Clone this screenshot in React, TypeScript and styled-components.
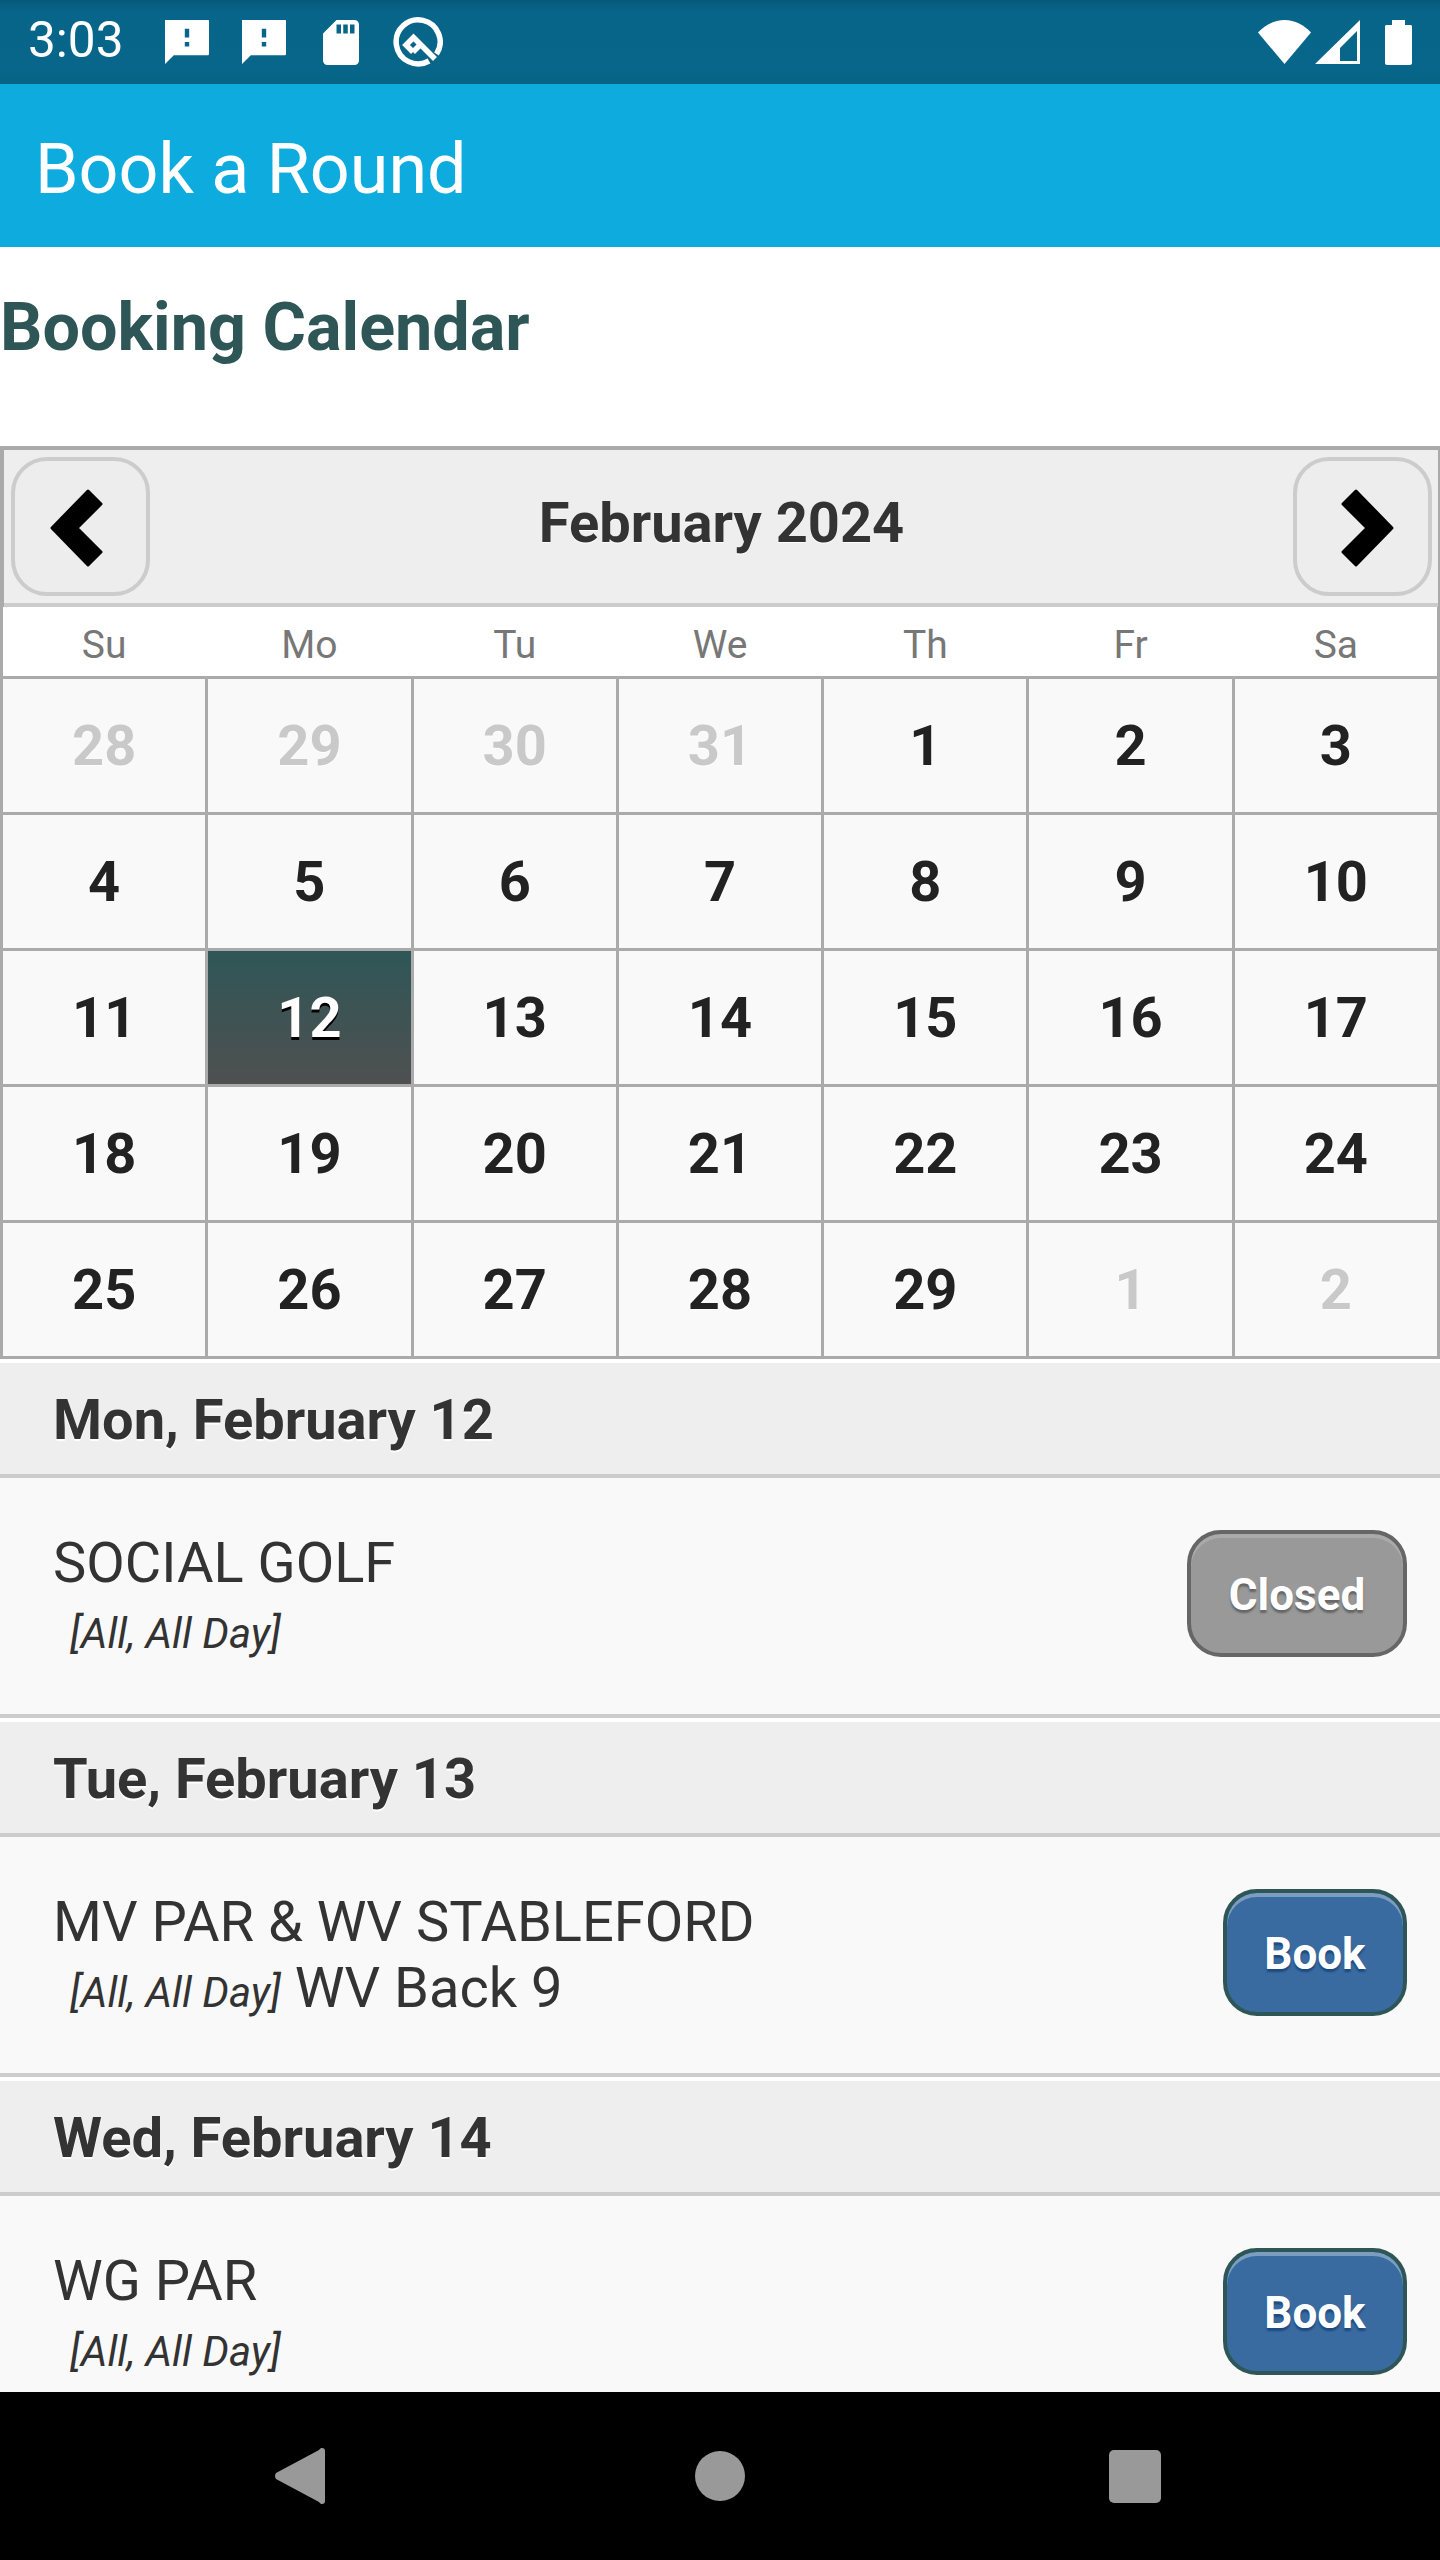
import React from 'react';
import styled, { createGlobalStyle } from 'styled-components';

const Global = createGlobalStyle`
  html, body { margin: 0; padding: 0; background: #fff; }
  body { font-family: Roboto, "Liberation Sans", sans-serif; }
  * { box-sizing: border-box; }
`;

const Screen = styled.div`
  width: 1440px; height: 2560px; display: flex; flex-direction: column; overflow: hidden; background: #fff;
`;
const StatusBar = styled.div`
  height: 84px; flex: none; display: flex; align-items: center; padding: 0 28px 0 28px;
  background: linear-gradient(#05597a 0, #07658a 14%, #07668a 80%, #066484 100%);
  color: #fff;
`;
const Time = styled.span`
  font-size: 49.500px; font-weight: 400; width: 137px; line-height: 1; margin-top: -2px;
`;
const StatusIcons = styled.div`
  display: flex; align-items: center; flex: 1;
`;
const StatusIcon = styled.svg<{ $gap?: number }>`
  display: block; flex: none; fill: #fff; margin-left: ${p => p.$gap ?? 0}px;
`;
const QIcon = styled(StatusIcon)`
  fill: none; stroke: #fff; stroke-width: 5.500px;
`;
const AppBar = styled.header`
  height: 163px; flex: none; background: #0eabdf; color: #fff; display: flex; align-items: center; padding: 6px 0 0 35px;
  font-size: 70px; font-weight: 400;
`;
const Content = styled.main`
  flex: 1; min-height: 0; overflow: hidden; background: #fff;
`;
const Heading = styled.h1`
  margin: 0; height: 199px; padding: 45px 0 0 0; color: #2f5657; font-size: 66.500px; line-height: 70px; font-weight: 700;
`;
const CalHead = styled.div`
  height: 161px; display: flex; align-items: flex-start; justify-content: space-between; background: #eee;
  border: solid #aaa; border-width: 4px 2px 0 4px; box-shadow: inset 0 -4px 0 #ccc; padding: 7px 6px 0 7px;
`;
const NavButton = styled.div<{ $side: 'l' | 'r' }>`
  width: 139px; height: 139px; border: 4px solid #ccc; border-radius: 36px; background: #ededed; display: flex; align-items: center; justify-content: center;
  ${p => p.$side === 'l' ? 'padding: 2px 8px 0 0;' : 'padding: 2px 0 0 10px;'}
`;
const ChevronIcon = styled.svg<{ $flip?: boolean }>`
  display: block; ${p => p.$flip ? 'transform: scaleX(-1);' : ''}
`;
const Month = styled.div`
  font-size: 56px; font-weight: 700; color: #333; line-height: 139px; margin-top: -3px; text-shadow: 0 1px 0 #fff;
`;
const Weekdays = styled.div`
  display: grid; grid-template-columns: repeat(7, 1fr); height: 69px; border-left: 3px solid #aaa; background: #fff;
`;
const Weekday = styled.div`
  font-size: 39px; color: #777; font-weight: 400; text-align: center; line-height: 76px; height: 69px;
  border-right: 3px solid transparent;
  &:last-child { border-right-color: #aaa; }
`;
const Grid = styled.div`
  display: grid; grid-template-columns: repeat(7, 1fr); grid-auto-rows: 136px; border-top: 3px solid #aaa; border-left: 3px solid #aaa;
`;
const Cell = styled.div<{ $muted?: boolean; $sel?: boolean }>`
  border-right: 3px solid #aaa; border-bottom: 3px solid #aaa; display: flex; align-items: center; justify-content: center;
  font-size: 56px; font-weight: 700; padding-top: 1px;
  background: ${p => p.$sel ? 'linear-gradient(#2f5657, #4f5050)' : '#f9f9f9'};
  color: ${p => p.$sel ? '#fff' : p.$muted ? '#c9c9c9' : '#222'};
  text-shadow: ${p => p.$sel ? '0 3px 0 #000' : '0 1px 0 #fff'};
`;
const List = styled.div`
  margin-top: 4px;
`;
const DayHead = styled.div`
  height: 115px; background: #eee; border-bottom: 4px solid #ccc; padding: 2px 0 0 53px; display: flex; align-items: center;
  font-size: 56px; font-weight: 700; color: #333; text-shadow: 0 2px 1px #fff;
`;
const EventRow = styled.div`
  height: 240px; background: #f9f9f9; border-bottom: 4px solid #ccc; display: flex; justify-content: space-between; align-items: flex-start; padding: 52px 33px 0 53px; margin-bottom: 4px;
`;
const EventText = styled.div`
  color: #333; font-weight: 400; font-size: 56px; line-height: 66px;
`;
const EventTitle = styled.div``;
const EventSub = styled.div`
  padding-left: 17px; line-height: 66px;
`;
const Slot = styled.em`
  font-size: 42px; font-style: italic; font-weight: 400;
`;
const ActionButton = styled.div<{ $closed?: boolean }>`
  width: ${p => p.$closed ? 220 : 184}px; height: 127px; border-radius: 34px; border: 4px solid ${p => p.$closed ? '#666' : '#2f5657'};
  background: ${p => p.$closed ? '#999' : '#3a6ba0'}; display: flex; align-items: center; justify-content: center; padding-top: 2px;
  box-shadow: inset 0 4px 0 ${p => p.$closed ? '#aaa' : '#7a9dc0'};
  color: #fff; font-size: 44px; font-weight: 700;
  text-shadow: 0 3px 2px ${p => p.$closed ? '#666' : '#1d4a80'};
`;
const NavBar = styled.nav`
  height: 168px; flex: none; background: #000; display: flex; align-items: center; padding-left: 275px;
`;
const NavIcon = styled.svg<{ $gap?: number }>`
  display: block; flex: none; fill: #999; margin-left: ${p => p.$gap ?? 0}px;
`;

const weeks: [number, boolean][][] = [
  [[28, true], [29, true], [30, true], [31, true], [1, false], [2, false], [3, false]],
  [[4, false], [5, false], [6, false], [7, false], [8, false], [9, false], [10, false]],
  [[11, false], [12, false], [13, false], [14, false], [15, false], [16, false], [17, false]],
  [[18, false], [19, false], [20, false], [21, false], [22, false], [23, false], [24, false]],
  [[25, false], [26, false], [27, false], [28, false], [29, false], [1, true], [2, true]],
];
const days = ['Su', 'Mo', 'Tu', 'We', 'Th', 'Fr', 'Sa'];

const Alert = ({ gap }: { gap?: number }) => (
  <StatusIcon $gap={gap} width="44" height="44" viewBox="2 2 20 20"><path d="M21.600 2H2v20l4-4h15.600c.2 0 .4-.2.4-.4V2.400c0-.2-.2-.4-.4-.4zM13 14h-2v-2h2v2zm0-4h-2V6h2v4z" /></StatusIcon>
);

const Chevron = ({ flip }: { flip?: boolean }) => (
  <ChevronIcon $flip={flip} width="53" height="78" viewBox="50 489 53 78">
    <path d="M52 528 88 491 101 504 77 528 101 552 88 565z" fill="#000" stroke="#000" strokeWidth="3" strokeLinejoin="round" />
  </ChevronIcon>
);

export default function App() {
  return (
    <Screen>
      <Global />
      <StatusBar>
        <Time>3:03</Time>
        <StatusIcons>
          <Alert />
          <Alert gap={33} />
          <StatusIcon $gap={37} width="36" height="45" viewBox="4 2 16 20"><path d="M18 2h-8L4.020 8 4 20c0 1.100.9 2 2 2h12c1.100 0 2-.9 2-2V4c0-1.100-.9-2-2-2zm-6 6h-2V4h2v4zm3 0h-2V4h2v4zm3 0h-2V4h2v4z" /></StatusIcon>
          <QIcon $gap={34} width="50" height="50" viewBox="0 0 50 50">
            <path d="M43.500 37A22 22 0 1 0 36 44" />
            <path d="M20 35 13 28 20.500 20.500 42 42" />
            <path d="M20 35 27 28" />
          </QIcon>
        </StatusIcons>
        <StatusIcon width="53" height="44" viewBox="0 0 53 44"><path d="M26.500 44 0 12.500C7 5 16 0 26.500 0S46 5 53 12.500z" /></StatusIcon>
        <StatusIcon $gap={4} width="45" height="44" viewBox="0 0 45 44"><path fillRule="evenodd" d="M45 0v44H0zM42 11 25 28v13h17z" /></StatusIcon>
        <StatusIcon $gap={25} width="27" height="45" viewBox="0 0 27 45"><path d="M7 0h13v5h5.500c.8 0 1.500.7 1.500 1.500V43c0 1-.9 2-2 2H2c-1.100 0-2-1-2-2V6.500C0 5.700.7 5 1.500 5H7z" /></StatusIcon>
      </StatusBar>
      <AppBar>Book a Round</AppBar>
      <Content>
        <Heading>Booking Calendar</Heading>
        <CalHead>
          <NavButton $side="l"><Chevron /></NavButton>
          <Month>February 2024</Month>
          <NavButton $side="r"><Chevron flip /></NavButton>
        </CalHead>
        <Weekdays>{days.map(d => <Weekday key={d}>{d}</Weekday>)}</Weekdays>
        <Grid>
          {weeks.flat().map(([n, muted], i) => <Cell key={i} $muted={muted} $sel={i === 15}>{n}</Cell>)}
        </Grid>
        <List>
          <DayHead>Mon, February 12</DayHead>
          <EventRow>
            <EventText><EventTitle>SOCIAL GOLF</EventTitle><EventSub><Slot>[All, All Day]</Slot></EventSub></EventText>
            <ActionButton $closed>Closed</ActionButton>
          </EventRow>
          <DayHead>Tue, February 13</DayHead>
          <EventRow>
            <EventText><EventTitle>MV PAR &amp; WV STABLEFORD</EventTitle><EventSub><Slot>[All, All Day]</Slot> WV Back 9</EventSub></EventText>
            <ActionButton>Book</ActionButton>
          </EventRow>
          <DayHead>Wed, February 14</DayHead>
          <EventRow>
            <EventText><EventTitle>WG PAR</EventTitle><EventSub><Slot>[All, All Day]</Slot></EventSub></EventText>
            <ActionButton>Book</ActionButton>
          </EventRow>
        </List>
      </Content>
      <NavBar>
        <NavIcon width="50" height="56" viewBox="0 0 50 56"><path d="M47 0c2 0 3 1 3 3v50c0 2-1 3-3 3-1 0-2-.5-3-2L1 31c-1.300-2-1.300-4 0-6L44 2c1-1.500 2-2 3-2z" /></NavIcon>
        <NavIcon $gap={370} width="50" height="50" viewBox="0 0 50 50"><circle cx="25" cy="25" r="25" /></NavIcon>
        <NavIcon $gap={364} width="52" height="53" viewBox="0 0 52 53"><rect width="52" height="53" rx="5" /></NavIcon>
      </NavBar>
    </Screen>
  );
}
